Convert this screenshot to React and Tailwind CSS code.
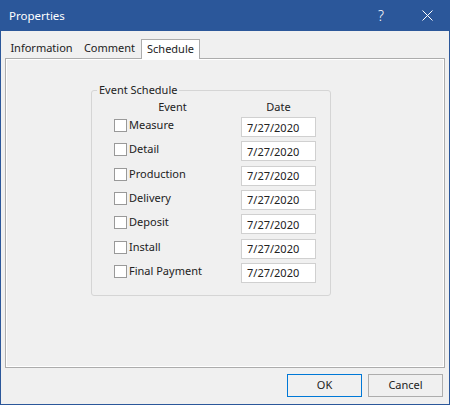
import React from 'react';

const events = ['Measure', 'Detail', 'Production', 'Delivery', 'Deposit', 'Install', 'Final Payment'];

const tabs = [
  { label: 'Information', width: 'w-[73px]' },
  { label: 'Comment', width: 'w-[63px]' },
];

const App = () => {
  return (
    <div className="w-[450px] h-[405px] flex flex-col bg-[#2b579a] font-['Noto_Sans',sans-serif] text-[11px] text-[#222]">
      {/* Title bar */}
      <div className="h-[31px] flex items-center text-white">
        <span className="pl-[9px] flex-1 text-[11.5px]">Properties</span>
        <div className="w-[46px] h-full flex items-center justify-center text-[14px] font-light">?</div>
        <div className="w-[46px] h-full flex items-center justify-center">
          <svg width="11" height="11" viewBox="0 0 11 11">
            <path d="M0.5 0.5 L10.5 10.5 M10.5 0.5 L0.5 10.5" stroke="#fff" strokeWidth="1" fill="none" />
          </svg>
        </div>
      </div>

      {/* Body */}
      <div className="flex-1 mx-[1px] mb-[1px] bg-[#f0f0f0] flex flex-col px-[4px]">
        {/* Tabs */}
        <div className="h-[27px] flex items-end">
          {tabs.map((tab) => (
            <div key={tab.label} className={`${tab.width} h-[19px] flex items-center justify-center`}>
              {tab.label}
            </div>
          ))}
          <div className="w-[59px] h-[20px] -mb-px relative z-10 flex items-center justify-center bg-white border border-b-0 border-[#acacac]">
            Schedule
          </div>
        </div>

        {/* Tab page */}
        <div className="h-[310px] border border-[#acacac] shadow-[inset_0_0_0_1px_#ffffff] pt-[23px]">
          <fieldset className="ml-[85px] w-[240px] border border-[#d5d5d5] rounded-[3px] p-0 pb-[12px]">
            <legend className="ml-[5px] px-[2px] leading-[16px]">Event Schedule</legend>
            <div className="grid grid-cols-[117px_75px] gap-x-[10px] pl-[22px] h-[19px] items-center">
              <span className="text-center">Event</span>
              <span className="text-center">Date</span>
            </div>
            <div className="flex flex-col gap-[4.33px]">
              {events.map((name) => (
                <div key={name} className="grid grid-cols-[117px_75px] gap-x-[10px] pl-[22px] h-[20px]">
                  <label className="flex items-start leading-[16px]">
                    <span className="mt-[2px] w-[13px] h-[13px] border border-[#999999] bg-white shrink-0" />
                    <span className="ml-[2px]">{name}</span>
                  </label>
                  <input
                    type="text"
                    readOnly
                    defaultValue="7/27/2020"
                    className="w-[75px] h-[20px] border border-[#d0d0d0] bg-white px-[5px] text-[11px] text-[#222] outline-none"
                  />
                </div>
              ))}
            </div>
          </fieldset>
        </div>

        {/* Buttons */}
        <div className="mt-[6px] mr-[2px] flex justify-end gap-[6px]">
          <button className="w-[75px] h-[23px] border border-[#0078d7] bg-[#f0f0f0]">OK</button>
          <button className="w-[75px] h-[23px] border border-[#adadad] bg-[#f0f0f0]">Cancel</button>
        </div>
      </div>
    </div>
  );
};

export default App;
